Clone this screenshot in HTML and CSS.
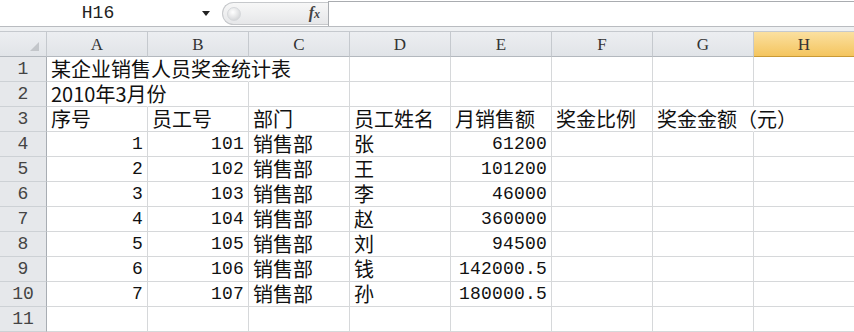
FILE: index.html
```html
<!DOCTYPE html>
<html lang="zh-CN">
<head>
    <meta charset="UTF-8">
    <title>某企业销售人员奖金统计表</title>
    <link rel="stylesheet" href="styles.css">
</head>
<body>
    <div class="formula-bar">
        <div class="name-box">H16</div>
        <div class="name-arrow"></div>
        <div class="fx-area">
            <span class="grip"></span>
            <span class="fx">f<span class="fx-x">x</span></span>
        </div>
        <div class="formula-input"></div>
    </div>
    <div class="bar-gap"></div>

    <div class="sheet">
        <div class="corner"><span class="corner-tri"></span></div>
        <div class="col-head">A</div>
        <div class="col-head">B</div>
        <div class="col-head">C</div>
        <div class="col-head">D</div>
        <div class="col-head">E</div>
        <div class="col-head">F</div>
        <div class="col-head">G</div>
        <div class="col-head active">H</div>

        <div class="row-head">1</div>
        <div class="cell text spill">某企业销售人员奖金统计表</div>
        <div class="cell spill"></div>
        <div class="cell"></div>
        <div class="cell"></div>
        <div class="cell"></div>
        <div class="cell"></div>
        <div class="cell"></div>
        <div class="cell"></div>

        <div class="row-head">2</div>
        <div class="cell text spill">2010年3月份</div>
        <div class="cell"></div>
        <div class="cell"></div>
        <div class="cell"></div>
        <div class="cell"></div>
        <div class="cell"></div>
        <div class="cell"></div>
        <div class="cell"></div>

        <div class="row-head">3</div>
        <div class="cell text">序号</div>
        <div class="cell text">员工号</div>
        <div class="cell text">部门</div>
        <div class="cell text">员工姓名</div>
        <div class="cell text">月销售额</div>
        <div class="cell text">奖金比例</div>
        <div class="cell text spill">奖金金额（元）</div>
        <div class="cell"></div>

        <div class="row-head">4</div>
        <div class="cell num">1</div>
        <div class="cell num">101</div>
        <div class="cell text">销售部</div>
        <div class="cell text">张</div>
        <div class="cell num">61200</div>
        <div class="cell"></div>
        <div class="cell"></div>
        <div class="cell"></div>

        <div class="row-head">5</div>
        <div class="cell num">2</div>
        <div class="cell num">102</div>
        <div class="cell text">销售部</div>
        <div class="cell text">王</div>
        <div class="cell num">101200</div>
        <div class="cell"></div>
        <div class="cell"></div>
        <div class="cell"></div>

        <div class="row-head">6</div>
        <div class="cell num">3</div>
        <div class="cell num">103</div>
        <div class="cell text">销售部</div>
        <div class="cell text">李</div>
        <div class="cell num">46000</div>
        <div class="cell"></div>
        <div class="cell"></div>
        <div class="cell"></div>

        <div class="row-head">7</div>
        <div class="cell num">4</div>
        <div class="cell num">104</div>
        <div class="cell text">销售部</div>
        <div class="cell text">赵</div>
        <div class="cell num">360000</div>
        <div class="cell"></div>
        <div class="cell"></div>
        <div class="cell"></div>

        <div class="row-head">8</div>
        <div class="cell num">5</div>
        <div class="cell num">105</div>
        <div class="cell text">销售部</div>
        <div class="cell text">刘</div>
        <div class="cell num">94500</div>
        <div class="cell"></div>
        <div class="cell"></div>
        <div class="cell"></div>

        <div class="row-head">9</div>
        <div class="cell num">6</div>
        <div class="cell num">106</div>
        <div class="cell text">销售部</div>
        <div class="cell text">钱</div>
        <div class="cell num">142000.5</div>
        <div class="cell"></div>
        <div class="cell"></div>
        <div class="cell"></div>

        <div class="row-head">10</div>
        <div class="cell num">7</div>
        <div class="cell num">107</div>
        <div class="cell text">销售部</div>
        <div class="cell text">孙</div>
        <div class="cell num">180000.5</div>
        <div class="cell"></div>
        <div class="cell"></div>
        <div class="cell"></div>

        <div class="row-head">11</div>
        <div class="cell"></div>
        <div class="cell"></div>
        <div class="cell"></div>
        <div class="cell"></div>
        <div class="cell"></div>
        <div class="cell"></div>
        <div class="cell"></div>
        <div class="cell"></div>
    </div>
</body>
</html>
```

FILE: styles.css
```css
body, html {
    margin: 0;
    padding: 0;
    background-color: #ffffff;
    overflow: hidden;
    font-family: "Noto Sans CJK SC", sans-serif;
}

/* formula bar */
.formula-bar {
    display: flex;
    height: 26px;
    border-bottom: 1px solid #b9bcc0;
    background-color: #ffffff;
}

.name-box {
    width: 196px;
    display: flex;
    align-items: center;
    justify-content: center;
    font-family: "Liberation Mono", monospace;
    font-size: 18px;
    line-height: 20px;
    color: #222;
}

.name-arrow {
    width: 0;
    height: 0;
    margin: 11px 12px 0 6px;
    border-left: 4px solid transparent;
    border-right: 4px solid transparent;
    border-top: 5px solid #222;
}

.fx-area {
    width: 106px;
    display: flex;
    align-items: center;
    justify-content: space-between;
    padding: 0 8px 0 4px;
    box-sizing: border-box;
    margin-top: 2px;
    height: 23px;
    border: 1px solid #c6c8cb;
    border-right: none;
    border-radius: 12px 0 0 12px;
    background: linear-gradient(#f7f7f7, #e6e7e9);
}

.grip {
    width: 12px;
    height: 12px;
    border-radius: 50%;
    background: radial-gradient(circle at 40% 35%, #ffffff, #c9cbce);
    border: 1px solid #d6d8db;
}

.fx {
    font-family: "Liberation Serif", "DejaVu Serif", serif;
    font-style: italic;
    font-weight: bold;
    font-size: 16px;
    line-height: 18px;
    color: #444;
}

.fx-x {
    font-size: 12px;
}

.formula-input {
    flex: 1;
    margin-top: 1px;
    border: 1px solid #a9acb0;
    border-right: none;
    border-bottom: none;
    background-color: #ffffff;
}

.bar-gap {
    height: 4px;
    background-color: #eef0f2;
}

/* sheet grid */
.sheet {
    display: grid;
    grid-template-columns: 47px repeat(8, 101px);
    grid-template-rows: 26px repeat(11, 25px);
    width: 855px;
}

.corner,
.col-head,
.row-head {
    box-sizing: border-box;
    background: linear-gradient(#eceef1, #e1e4e8);
    border-right: 1px solid #c5c9ce;
    border-bottom: 1px solid #b3b8be;
}

.corner {
    display: flex;
    align-items: flex-end;
    justify-content: flex-end;
    padding: 0 7px 5px 0;
    border-top: 1px solid #c5c9ce;
}

.corner-tri {
    width: 0;
    height: 0;
    border-left: 9px solid transparent;
    border-bottom: 9px solid #c3c6ca;
}

.col-head {
    display: flex;
    align-items: center;
    justify-content: center;
    padding-top: 2px;
    border-top: 1px solid #c5c9ce;
    font-family: "Liberation Serif", "DejaVu Serif", serif;
    font-size: 17px;
    line-height: 18px;
    color: #333;
}

.col-head.active {
    background: linear-gradient(#fbe0a0, #f4c55f);
    border-right-color: #d2a94a;
    border-bottom-color: #c99a36;
}

.row-head {
    display: flex;
    align-items: flex-end;
    justify-content: center;
    padding-bottom: 2px;
    background: #e6e8eb;
    border-right-color: #a8adb3;
    border-bottom-color: #cdd1d5;
    font-family: "Liberation Mono", monospace;
    font-size: 18px;
    line-height: 20px;
    color: #444;
}

.cell {
    box-sizing: border-box;
    display: flex;
    align-items: flex-end;
    border-right: 1px solid #d6d8da;
    border-bottom: 1px solid #d6d8da;
    white-space: nowrap;
    overflow: visible;
    color: #111;
}

.cell.spill {
    border-right-color: transparent;
    z-index: 1;
}

.cell.text {
    padding: 0 0 2px 4px;
    font-size: 20px;
    line-height: 21px;
}

.cell.num {
    justify-content: flex-end;
    padding: 0 4px 2px 0;
    font-family: "Liberation Mono", monospace;
    font-size: 18px;
    letter-spacing: 0.2px;
    line-height: 20px;
}
```
